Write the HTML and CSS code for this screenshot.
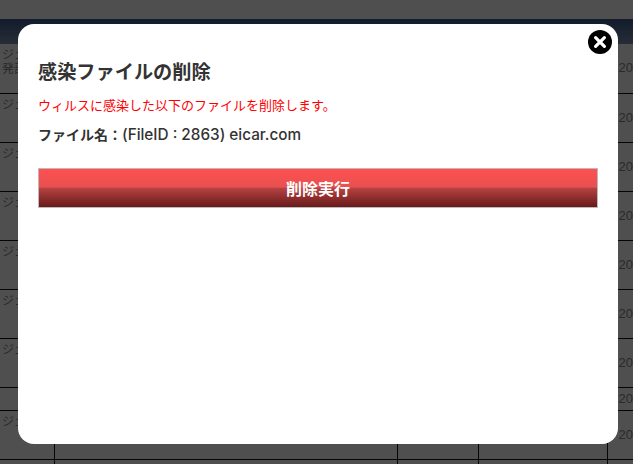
FILE: index.html
```html
<!DOCTYPE html>
<html lang="ja">
<head>
  <meta charset="UTF-8">
  <meta name="viewport" content="width=device-width, initial-scale=1.0">
  <title>感染ファイルの削除</title>
  <link rel="stylesheet" href="styles.css">
</head>
<body>

<!-- Page behind the dialog -->
<div class="page">
  <div class="top-bar"></div>
  <table class="file-table">
    <colgroup>
      <col class="col-name">
      <col class="col-main">
      <col class="col-size">
      <col class="col-user">
      <col class="col-date">
    </colgroup>
    <tr class="head-row"><th></th><th></th><th></th><th></th><th></th></tr>
    <tr><td class="name">ジェ<br>発部</td><td></td><td></td><td></td><td class="date">20</td></tr>
    <tr><td class="name">ジェ</td><td></td><td></td><td></td><td class="date">20</td></tr>
    <tr><td class="name">ジェ</td><td></td><td></td><td></td><td class="date">20</td></tr>
    <tr><td class="name">ジェ</td><td></td><td></td><td></td><td class="date">20</td></tr>
    <tr><td class="name">ジェ</td><td></td><td></td><td></td><td class="date">20</td></tr>
    <tr><td class="name">ジェ</td><td></td><td></td><td></td><td class="date">20</td></tr>
    <tr><td class="name">ジェ</td><td></td><td></td><td></td><td class="date">20</td></tr>
    <tr class="short-row"><td class="name"></td><td></td><td></td><td></td><td class="date">20</td></tr>
    <tr><td class="name">ジェ</td><td></td><td></td><td></td><td class="date">20</td></tr>
    <tr class="tail-row"><td class="name"></td><td></td><td></td><td></td><td class="date"></td></tr>
  </table>
</div>

<div class="overlay"></div>

<!-- Delete dialog -->
<div class="modal">
  <button class="close-button" aria-label="閉じる">
    <svg width="24" height="24" viewBox="0 0 24 24">
      <circle cx="12" cy="12" r="12" fill="#000"/>
      <path d="M7.6 7.6 L16.4 16.4 M16.4 7.6 L7.6 16.4" stroke="#fff" stroke-width="3.2" stroke-linecap="round"/>
    </svg>
  </button>
  <h2>感染ファイルの削除</h2>
  <p class="warning">ウィルスに感染した以下のファイルを削除します。</p>
  <p class="file-name">ファイル名：<span class="file-id">(FileID : 2863) eicar.com</span></p>
  <button class="delete-button">削除実行</button>
</div>

</body>
</html>
```

FILE: styles.css
```css
/* Page behind the dialog */
body {
  font-family: "Liberation Sans", "Noto Sans CJK JP", sans-serif;
  background-color: #fff;
  margin: 0;
  padding: 0;
  color: #333;
  height: 464px;
  overflow: hidden;
}
.top-bar {
  height: 19px;
  background-color: #fff;
}
.file-table {
  width: 633px;
  table-layout: fixed;
  border-collapse: collapse;
}
.col-name { width: 54px; }
.col-main { width: 343px; }
.col-size { width: 81px; }
.col-user { width: 129px; }
.col-date { width: 26px; }
.head-row th {
  height: 25px;
  padding: 0;
  background: linear-gradient(#3a5a90, #8090b0);
}
.file-table td {
  box-sizing: border-box;
  height: 49px;
  padding: 0;
  border: 1px solid #111;
  border-top: none;
  color: #888;
  font-size: 12px;
  line-height: 14px;
}
.file-table .short-row td {
  height: 23px;
}
.file-table .tail-row td {
  height: 5px;
  border-bottom: none;
}
.file-table td.name {
  padding: 4px 0 0 2px;
  vertical-align: top;
  border-left: none;
  white-space: nowrap;
  overflow: hidden;
}
.file-table td.date {
  padding-left: 11px;
  font-size: 13px;
  border-right: none;
  white-space: nowrap;
  overflow: hidden;
}
.overlay {
  position: fixed;
  top: 0;
  left: 0;
  width: 100%;
  height: 100%;
  background: rgba(0, 0, 0, 0.69);
}

/* Dialog */
.modal {
  position: absolute;
  top: 24px;
  left: 18px;
  width: 560px;
  height: 382px;
  padding: 38px 20px 0;
  background-color: #fff;
  border-radius: 16px;
}
.close-button {
  position: absolute;
  top: 6px;
  right: 6px;
  width: 24px;
  height: 24px;
  padding: 0;
  border: none;
  background: none;
}
.close-button svg {
  display: block;
}
.modal h2 {
  margin: 0 0 13px;
  font-size: 19.2px;
  line-height: 22px;
  font-weight: bold;
  color: #333;
}
.warning {
  margin: 0 0 10px;
  font-size: 13px;
  line-height: 18px;
  color: #f00;
}
.file-name {
  margin: 0 0 23px;
  font-size: 14px;
  line-height: 20px;
  font-weight: bold;
  color: #333;
}
.file-id {
  font-family: Inter, "Liberation Sans", sans-serif;
  font-size: 15.3px;
  font-weight: 500;
}
.delete-button {
  display: block;
  box-sizing: border-box;
  width: 100%;
  height: 40px;
  padding: 0;
  border: 1px solid #bbb;
  background: linear-gradient(#ff5050 0%, #e85050 48%, #b84242 50%, #671a1a 100%);
  color: #fff;
  font-family: inherit;
  font-size: 16px;
  font-weight: bold;
  cursor: pointer;
}
```
